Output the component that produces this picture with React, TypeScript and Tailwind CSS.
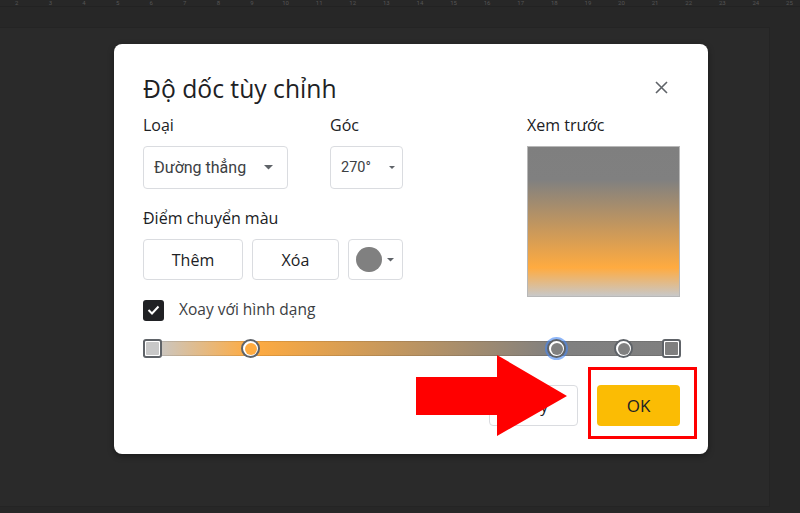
import React from "react";

const stops = [
  { pos: 0, color: "#c8c8c8", shape: "square" },
  { pos: 0.19, color: "#ffab40", shape: "circle" },
  { pos: 0.78, color: "#808080", shape: "circle", selected: true },
  { pos: 0.909, color: "#808080", shape: "circle" },
  { pos: 1, color: "#7f7f7f", shape: "square" },
];

const gsans = { fontFamily: "'Open Sans', 'Noto Sans', sans-serif" };

function Caret({ small = false }: { small?: boolean }) {
  return small ? (
    <svg width="7" height="4" viewBox="0 0 7 4" className="block">
      <path d="M0 0h7L3.5 3.5z" fill="#5f6368" />
    </svg>
  ) : (
    <svg width="9" height="5" viewBox="0 0 9 5" className="block">
      <path d="M0 0h9L4.5 4.5z" fill="#5f6368" />
    </svg>
  );
}

export default function App() {
  const nums = Array.from({ length: 24 }, (_, i) => i + 2);
  return (
    <div
      className="w-[800px] h-[513px] bg-[#272727] overflow-hidden flex flex-col"
      style={{ fontFamily: "Roboto, 'Noto Sans', sans-serif" }}
    >
      {/* ruler */}
      <div className="h-[6px] flex">
        {nums.map((n) => (
          <div key={n} className="w-[33.6px] shrink-0 flex justify-center text-[6px] leading-[6px] text-[#555555]">
            {n}
          </div>
        ))}
      </div>
      <div className="h-px bg-[#222222]" />
      <div className="h-[20px]" />
      <div className="w-[770px] h-[480px] bg-[#2a2a2a] border-t border-r border-b border-[#242424] pl-[114px] pt-[16px]">
        {/* dialog */}
        <div className="relative w-[594px] h-[410px] bg-white rounded-[8px] shadow-[0_2px_6px_rgba(0,0,0,0.4)] pl-[29px] pr-[28px] pt-[31px] flex flex-col text-[#202124]">
          <div className="flex items-start justify-between h-[28px]">
            <div className="text-[24.7px] leading-[28px]" style={gsans}>
              Độ dốc tùy chỉnh
            </div>
            <svg width="13" height="13" viewBox="0 0 13 13" className="mt-[6px] mr-[12px]">
              <path d="M1 1l11 11M12 1L1 12" stroke="#5f6368" strokeWidth="1.6" />
            </svg>
          </div>

          <div className="mt-[12px] flex justify-between" style={gsans}>
            {/* left column */}
            <div className="w-[260px] flex flex-col">
              <div className="flex gap-[42px]">
                <div className="flex flex-col">
                  <div className="h-[20px] text-[16px] leading-[20px]">Loại</div>
                  <div className="mt-[11px] w-[145px] h-[43px] border border-[#dadce0] rounded-[4px] flex items-center justify-between pl-[10px] pr-[14px]">
                    <span className="text-[16px] text-[#3c4043]" style={{ fontFamily: "Roboto, sans-serif" }}>Đường thẳng</span>
                    <Caret />
                  </div>
                </div>
                <div className="flex flex-col">
                  <div className="h-[20px] text-[16px] leading-[20px]">Góc</div>
                  <div className="mt-[11px] w-[73px] h-[43px] border border-[#dadce0] rounded-[4px] flex items-center justify-between pl-[10px] pr-[7px]">
                    <span className="text-[14.5px] text-[#3c4043]" style={{ fontFamily: "Roboto, sans-serif" }}>270°</span>
                    <svg width="6" height="3" viewBox="0 0 6 3" className="block">
                      <path d="M0 0h6L3 3z" fill="#5f6368" />
                    </svg>
                  </div>
                </div>
              </div>
              <div className="mt-[19px] h-[20px] text-[16px] leading-[20px]">Điểm chuyển màu</div>
              <div className="mt-[11px] flex gap-[9px] h-[41px]">
                <div className="w-[100px] border border-[#dadce0] rounded-[4px] flex items-center justify-center text-[16px]">Thêm</div>
                <div className="w-[87px] border border-[#dadce0] rounded-[4px] flex items-center justify-center text-[16px]">Xóa</div>
                <div className="w-[55px] border border-[#dadce0] rounded-[4px] flex items-center pl-[7px] gap-[5px]">
                  <div className="w-[26px] h-[25px] rounded-full bg-[#808080]" />
                  <Caret small />
                </div>
              </div>
              <div className="mt-[20px] h-[20px] flex items-center gap-[15px]">
                <div className="w-[21px] h-[21px] rounded-[3px] bg-[#202124] flex items-center justify-center">
                  <svg width="13" height="10" viewBox="0 0 13 10">
                    <path d="M1.5 5l3.5 3.5L11.5 1.5" stroke="white" strokeWidth="2" fill="none" />
                  </svg>
                </div>
                <span className="text-[15.5px] text-[#3c4043]">Xoay với hình dạng</span>
              </div>
            </div>

            {/* right column */}
            <div className="w-[153px] flex flex-col">
              <div className="h-[20px] text-[16px] leading-[20px]">Xem trước</div>
              <div className="mt-[11px] h-[151px] border border-[#b8b8b8] bg-[linear-gradient(to_top,#c8c8c8_0%,#ffab40_19%,#808080_78%,#7f7f7f_100%)]" />
            </div>
          </div>

          {/* slider */}
          <div className="mt-[19px] h-[19px] relative flex items-center">
            <div className="w-full h-[15px] border border-black/10 bg-[linear-gradient(to_right,#c8c8c8_2%,#ffab40_20%,#808080_77%,#7f7f7f_100%)]" />
            {stops.map((s, i) => {
              const left = 9 + s.pos * 519;
              return s.shape === "square" ? (
                <div
                  key={i}
                  className="absolute top-0 w-[19px] h-[19px] -ml-[9.5px] rounded-[3px] border-2 border-[#5f6368] bg-white p-px"
                  style={{ left }}
                >
                  <div className="w-full h-full rounded-[1px]" style={{ background: s.color }} />
                </div>
              ) : (
                <div
                  key={i}
                  className={
                    "absolute top-0 w-[19px] h-[19px] -ml-[9.5px] rounded-full border-2 border-[#5f6368] bg-white p-[1.5px] " +
                    (s.selected ? "shadow-[0_0_0_2px_rgba(66,133,244,0.6)]" : "")
                  }
                  style={{ left }}
                >
                  <div className="w-full h-full rounded-full" style={{ background: s.color }} />
                </div>
              );
            })}
          </div>

          {/* footer */}
          <div className="mt-[27px] h-[41px] flex justify-end gap-[19px]" style={gsans}>
            <div className="w-[89px] border border-[#dadce0] rounded-[4px] flex items-center justify-center text-[16px]">Hủy</div>
            <div className="w-[83px] rounded-[4px] bg-[#fbbc04] flex items-center justify-center text-[17px] text-[#202124]">OK</div>
          </div>

          {/* annotations */}
          <div className="absolute left-[474px] top-[323px] w-[109px] h-[72px] border-[3px] border-[#ff0000]" />
          <svg className="absolute left-[302px] top-[311px]" width="151" height="81" viewBox="0 0 151 81">
            <path d="M0 22H81V0L151 41L81 81V60H0Z" fill="#ff0000" />
          </svg>
        </div>
      </div>
    </div>
  );
}
